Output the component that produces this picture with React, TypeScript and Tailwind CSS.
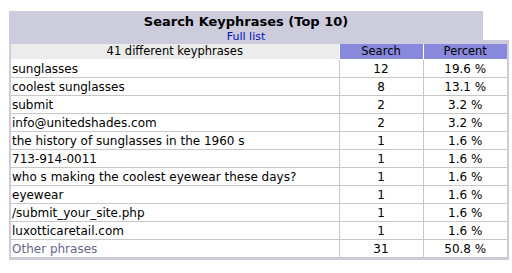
const ROWS = [
  { phrase: 'sunglasses', hits: 12, pct: '19.6 %' },
  { phrase: 'coolest sunglasses', hits: 8, pct: '13.1 %' },
  { phrase: 'submit', hits: 2, pct: '3.2 %' },
  { phrase: 'info@unitedshades.com', hits: 2, pct: '3.2 %' },
  { phrase: 'the history of sunglasses in the 1960 s', hits: 1, pct: '1.6 %' },
  { phrase: '713-914-0011', hits: 1, pct: '1.6 %' },
  { phrase: 'who s making the coolest eyewear these days?', hits: 1, pct: '1.6 %' },
  { phrase: 'eyewear', hits: 1, pct: '1.6 %' },
  { phrase: '/submit_your_site.php', hits: 1, pct: '1.6 %' },
  { phrase: 'luxotticaretail.com', hits: 1, pct: '1.6 %' },
]

const font = "font-['DejaVu_Sans',Verdana,sans-serif]"

export default function App() {
  return (
    <div className={`w-[512px] h-[273px] bg-white pt-[11px] pl-[9px] ${font}`}>
      {/* title tab */}
      <div className="flex w-[500px]">
        <div className="w-[474px] h-[29px] bg-[#ccccdd] flex flex-col items-center pt-[3px]">
          <div className="text-[13px] leading-[15px] font-bold text-black">Search Keyphrases (Top 10)</div>
          <a className="text-[11px] leading-[13px] pt-[1px] text-[#0011bb]">Full list</a>
        </div>
        <div className="flex-1 bg-white" />
      </div>

      {/* data box */}
      <div className="w-[500px] bg-[#ccccdd] pt-[4px] px-[2px] pb-[2px]">
        <table className="w-[496px] border-collapse bg-white text-[12px] text-black table-fixed">
          <colgroup>
            <col className="w-[328px]" />
            <col className="w-[84px]" />
            <col className="w-[84px]" />
          </colgroup>
          <thead>
            <tr className="h-[15px] text-[11.5px]">
              <th className="bg-[#ececec] font-normal text-center leading-[14px] p-0 border-r border-b border-white">41 different keyphrases</th>
              <th className="bg-[#8888dd] font-normal text-center leading-[14px] p-0 border-r border-b border-white">Search</th>
              <th className="bg-[#8888dd] font-normal text-center leading-[14px] p-0 border-b border-white">Percent</th>
            </tr>
          </thead>
          <tbody>
            {ROWS.map((r) => (
              <tr key={r.phrase} className="h-[18px]">
                <td className="text-left pl-[1px] pt-[1px] pb-0 leading-[16px] border-r border-b border-[#c8c8c8] whitespace-nowrap">{r.phrase}</td>
                <td className="text-center px-0 pt-[1px] pb-0 leading-[16px] border-r border-b border-[#c8c8c8]">{r.hits}</td>
                <td className="text-center px-0 pt-[1px] pb-0 leading-[16px] border-b border-[#c8c8c8]">{r.pct}</td>
              </tr>
            ))}
            <tr className="h-[18px]">
              <td className="text-left pl-[1px] pt-[1px] pb-0 leading-[16px] border-r border-b border-[#c8c8c8] text-[#666688]">Other phrases</td>
              <td className="text-center px-0 pt-[1px] pb-0 leading-[16px] border-r border-b border-[#c8c8c8]">31</td>
              <td className="text-center px-0 pt-[1px] pb-0 leading-[16px] border-b border-[#c8c8c8]">50.8 %</td>
            </tr>
          </tbody>
        </table>
      </div>
    </div>
  )
}
